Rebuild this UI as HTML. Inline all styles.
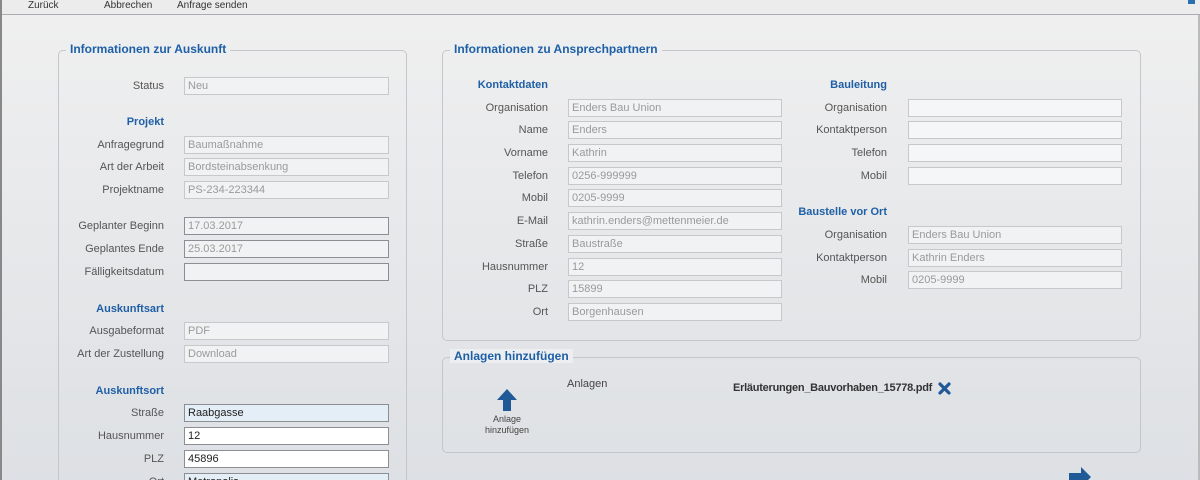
<!DOCTYPE html>
<html style="width:1200px;height:480px;overflow:hidden"><head><meta charset="utf-8"><style>
*{box-sizing:border-box;margin:0;padding:0}
body{width:1200px;height:480px;overflow:hidden;position:relative;font-family:"Liberation Sans",sans-serif;font-size:11px;color:#444;background:linear-gradient(#f0f0f0,#dde0e4)}
.tb{position:absolute;left:0;top:0;width:1200px;height:15px;border-bottom:1px solid #a9acb0;background:#ececec}
.tb span{position:absolute;top:0;font-size:10px;color:#333}
.lb{position:absolute;left:0;top:0;width:2px;height:480px;background:#888}
.rb{position:absolute;right:0;top:15px;width:2px;height:465px;background:#bbb}
.fs{position:absolute;border:1px solid #c3c7cc;border-radius:5px}
.lg{position:absolute;font-weight:bold;font-size:12px;color:#1f5fa6;background:#eceef0;padding:0 4px;white-space:nowrap}
.l{position:absolute;text-align:right;white-space:nowrap;line-height:18px;color:#555}
.h{position:absolute;text-align:right;font-weight:bold;color:#1f5fa6;white-space:nowrap}
.i{position:absolute;height:18px;border:1px solid #c6c8ca;background:#f1f2f3;color:#9a9a9a;line-height:16px;padding-left:3px;white-space:nowrap;overflow:hidden}
.i.e{background:#fff;border-color:#8b8f93;color:#222}
.i.b{background:#e4eef6;border-color:#8b8f93;color:#222}
.i.w{background:#f5f6f7}
</style></head><body>
<div class="tb"><span style="left:28px">Zurück</span><span style="left:104px">Abbrechen</span><span style="left:177px">Anfrage senden</span><span style="left:1188px;top:0;width:7px;height:4px;background:#2a6fb0"></span></div>
<div class="lb"></div><div class="rb"></div>

<div class="fs" style="left:58px;top:50px;width:349px;height:440px"></div>
<div class="lg" style="left:66px;top:42px">Informationen zur Auskunft</div>
<div class="l" style="left:60px;width:104px;top:77px">Status</div><div class="i" style="left:184px;top:77px;width:205px">Neu</div>
<div class="h" style="left:60px;width:104px;top:116px">Projekt</div>
<div class="l" style="left:60px;width:104px;top:136px">Anfragegrund</div><div class="i" style="left:184px;top:136px;width:205px">Baumaßnahme</div>
<div class="l" style="left:60px;width:104px;top:158px">Art der Arbeit</div><div class="i" style="left:184px;top:158px;width:205px">Bordsteinabsenkung</div>
<div class="l" style="left:60px;width:104px;top:181px">Projektname</div><div class="i" style="left:184px;top:181px;width:205px">PS-234-223344</div>
<div class="l" style="left:60px;width:104px;top:217px">Geplanter Beginn</div><div class="i" style="left:184px;top:217px;width:205px;border-color:#8b8f93">17.03.2017</div>
<div class="l" style="left:60px;width:104px;top:240px">Geplantes Ende</div><div class="i" style="left:184px;top:240px;width:205px;border-color:#8b8f93">25.03.2017</div>
<div class="l" style="left:60px;width:104px;top:263px">Fälligkeitsdatum</div><div class="i" style="left:184px;top:263px;width:205px;border-color:#8b8f93"></div>
<div class="h" style="left:60px;width:104px;top:303px">Auskunftsart</div>
<div class="l" style="left:60px;width:104px;top:322px">Ausgabeformat</div><div class="i" style="left:184px;top:322px;width:205px">PDF</div>
<div class="l" style="left:60px;width:104px;top:345px">Art der Zustellung</div><div class="i" style="left:184px;top:345px;width:205px">Download</div>
<div class="h" style="left:60px;width:104px;top:385px">Auskunftsort</div>
<div class="l" style="left:60px;width:104px;top:404px">Straße</div><div class="i b" style="left:184px;top:404px;width:205px">Raabgasse</div>
<div class="l" style="left:60px;width:104px;top:427px">Hausnummer</div><div class="i e" style="left:184px;top:427px;width:205px">12</div>
<div class="l" style="left:60px;width:104px;top:450px">PLZ</div><div class="i e" style="left:184px;top:450px;width:205px">45896</div>
<div class="l" style="left:60px;width:104px;top:473px">Ort</div><div class="i b" style="left:184px;top:473px;width:205px">Metropolis</div>

<div class="fs" style="left:442px;top:50px;width:699px;height:291px"></div>
<div class="lg" style="left:450px;top:42px">Informationen zu Ansprechpartnern</div>
<div class="h" style="left:440px;width:108px;top:79px">Kontaktdaten</div>
<div class="l" style="left:440px;width:108px;top:99px">Organisation</div><div class="i" style="left:568px;top:99px;width:214px">Enders Bau Union</div>
<div class="l" style="left:440px;width:108px;top:121px">Name</div><div class="i" style="left:568px;top:121px;width:214px">Enders</div>
<div class="l" style="left:440px;width:108px;top:144px">Vorname</div><div class="i" style="left:568px;top:144px;width:214px">Kathrin</div>
<div class="l" style="left:440px;width:108px;top:167px">Telefon</div><div class="i" style="left:568px;top:167px;width:214px">0256-999999</div>
<div class="l" style="left:440px;width:108px;top:189px">Mobil</div><div class="i" style="left:568px;top:189px;width:214px">0205-9999</div>
<div class="l" style="left:440px;width:108px;top:212px">E-Mail</div><div class="i" style="left:568px;top:212px;width:214px">kathrin.enders@mettenmeier.de</div>
<div class="l" style="left:440px;width:108px;top:235px">Straße</div><div class="i" style="left:568px;top:235px;width:214px">Baustraße</div>
<div class="l" style="left:440px;width:108px;top:258px">Hausnummer</div><div class="i" style="left:568px;top:258px;width:214px">12</div>
<div class="l" style="left:440px;width:108px;top:280px">PLZ</div><div class="i" style="left:568px;top:280px;width:214px">15899</div>
<div class="l" style="left:440px;width:108px;top:303px">Ort</div><div class="i" style="left:568px;top:303px;width:214px">Borgenhausen</div>

<div class="h" style="left:780px;width:107px;top:79px">Bauleitung</div>
<div class="l" style="left:780px;width:107px;top:99px">Organisation</div><div class="i w" style="left:908px;top:99px;width:214px"></div>
<div class="l" style="left:780px;width:107px;top:121px">Kontaktperson</div><div class="i w" style="left:908px;top:121px;width:214px"></div>
<div class="l" style="left:780px;width:107px;top:144px">Telefon</div><div class="i w" style="left:908px;top:144px;width:214px"></div>
<div class="l" style="left:780px;width:107px;top:167px">Mobil</div><div class="i w" style="left:908px;top:167px;width:214px"></div>
<div class="h" style="left:780px;width:107px;top:206px">Baustelle vor Ort</div>
<div class="l" style="left:780px;width:107px;top:226px">Organisation</div><div class="i" style="left:908px;top:226px;width:214px">Enders Bau Union</div>
<div class="l" style="left:780px;width:107px;top:249px">Kontaktperson</div><div class="i" style="left:908px;top:249px;width:214px">Kathrin Enders</div>
<div class="l" style="left:780px;width:107px;top:271px">Mobil</div><div class="i" style="left:908px;top:271px;width:214px">0205-9999</div>

<div class="fs" style="left:442px;top:357px;width:699px;height:96px"></div>
<div class="lg" style="left:450px;top:349px">Anlagen hinzufügen</div>
<svg style="position:absolute;left:497px;top:389px" width="20" height="22" viewBox="0 0 20 22"><path d="M10 0 L20 11 L14 11 L14 22 L6 22 L6 11 L0 11 Z" fill="#1f5a96"/></svg>
<div style="position:absolute;left:467px;top:414px;width:80px;text-align:center;font-size:9px;line-height:11px;color:#444">Anlage<br>hinzufügen</div>
<div style="position:absolute;left:567px;top:378px;color:#444">Anlagen</div>
<div style="position:absolute;left:733px;top:382px;font-weight:bold;color:#333;font-size:11px;letter-spacing:-0.25px">Erläuterungen_Bauvorhaben_15778.pdf</div>
<svg style="position:absolute;left:938px;top:382px" width="13" height="13" viewBox="0 0 13 13"><path d="M2 2 L11 11 M11 2 L2 11" stroke="#1f5a96" stroke-width="3.2" stroke-linecap="round"/></svg>
<svg style="position:absolute;left:1069px;top:467px" width="22" height="13" viewBox="0 0 22 13"><path d="M12 0 L22 10 L12 20 L12 14 L0 14 L0 6 L12 6 Z" fill="#1f5a96"/></svg>
</body></html>
